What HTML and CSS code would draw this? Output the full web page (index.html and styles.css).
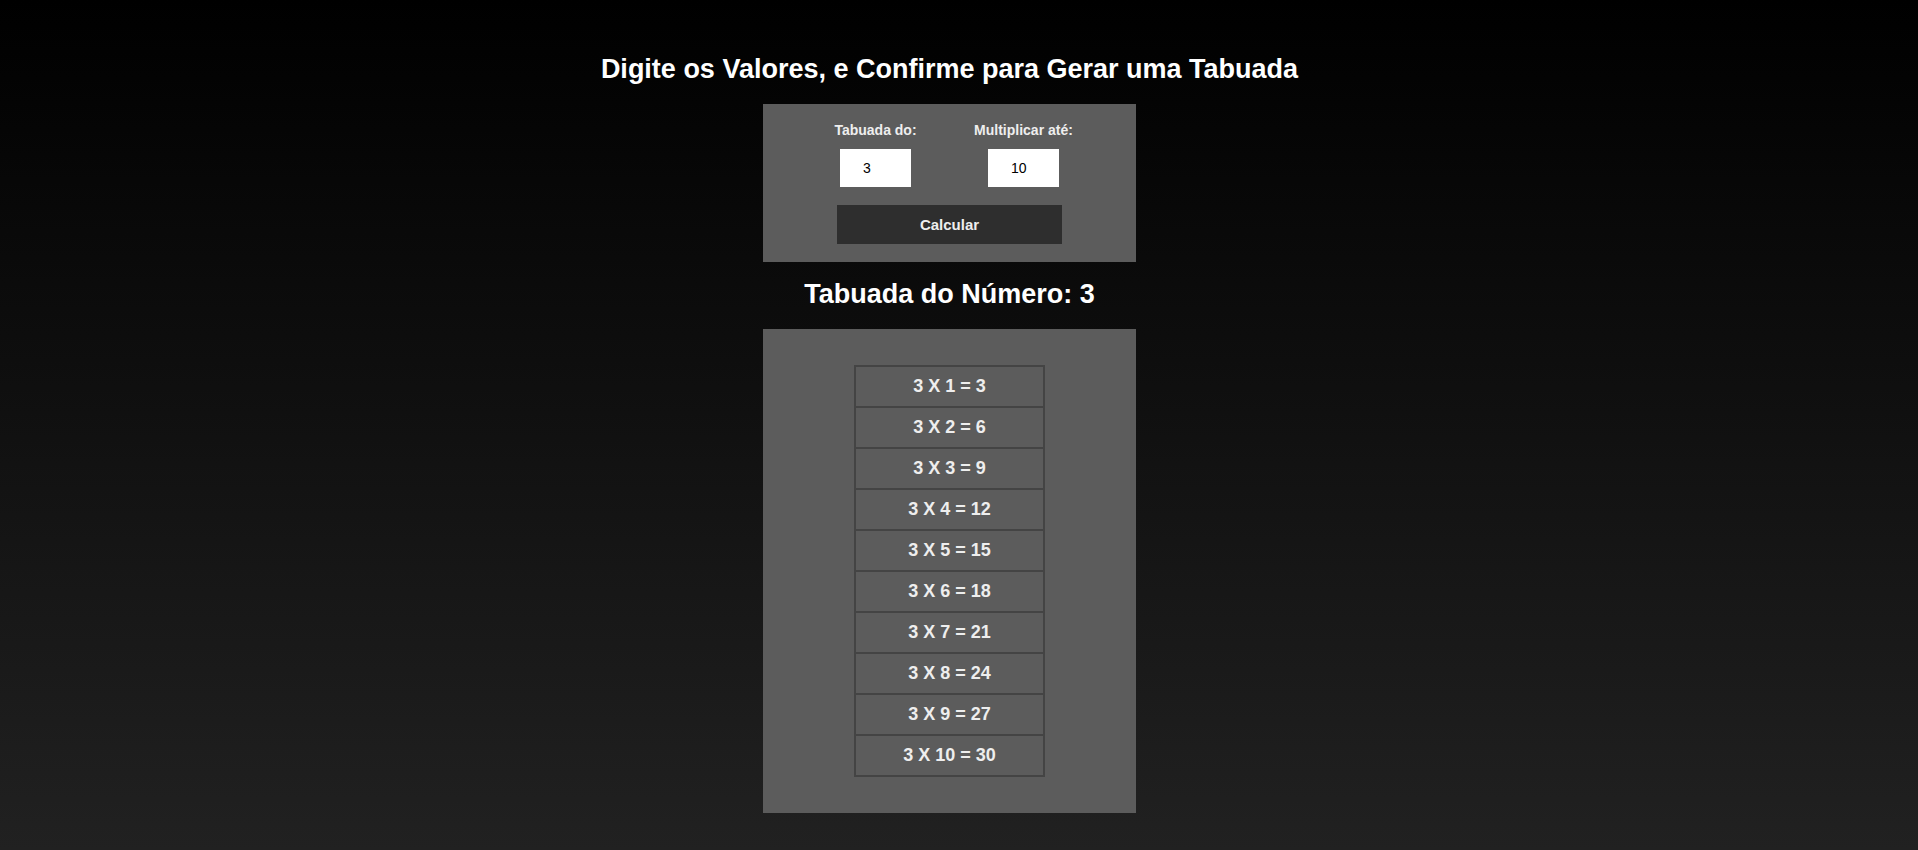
FILE: index.html
```html
<!DOCTYPE html>
<html lang="pt-BR">
<head>
    <meta charset="UTF-8">
    <meta name="viewport" content="width=device-width, initial-scale=1.0">
    <title>Tabuada</title>
    <link rel="stylesheet" href="styles.css">
</head>
<body>
    <div class="pagina">
        <h1 class="titulo">Digite os Valores, e Confirme para Gerar uma Tabuada</h1>
        <form id="formTabuada" class="painel">
            <div class="campos">
                <div class="campo">
                    <label for="numero">Tabuada do:</label>
                    <input type="number" id="numero" value="3">
                </div>
                <div class="campo">
                    <label for="limite">Multiplicar até:</label>
                    <input type="number" id="limite" value="10">
                </div>
            </div>
            <button type="button" onclick="gerarTabuada()">Calcular</button>
        </form>
        <h2 class="resultado" id="resultadoTitulo">Tabuada do Número: 3</h2>
        <div class="caixa-tabela">
            <table id="tabela">
                <tr><td>3 X 1 = 3</td></tr>
                <tr><td>3 X 2 = 6</td></tr>
                <tr><td>3 X 3 = 9</td></tr>
                <tr><td>3 X 4 = 12</td></tr>
                <tr><td>3 X 5 = 15</td></tr>
                <tr><td>3 X 6 = 18</td></tr>
                <tr><td>3 X 7 = 21</td></tr>
                <tr><td>3 X 8 = 24</td></tr>
                <tr><td>3 X 9 = 27</td></tr>
                <tr><td>3 X 10 = 30</td></tr>
            </table>
        </div>
    </div>
    <script>
        function gerarTabuada() {
            const numero = parseInt(document.getElementById('numero').value) || 0;
            const limite = parseInt(document.getElementById('limite').value) || 0;
            const tabela = document.getElementById('tabela');
            document.getElementById('resultadoTitulo').textContent = 'Tabuada do Número: ' + numero;
            tabela.innerHTML = '';
            for (let i = 1; i <= limite; i++) {
                const linha = tabela.insertRow();
                linha.insertCell().textContent = `${numero} X ${i} = ${numero * i}`;
            }
        }
    </script>
</body>
</html>
```

FILE: styles.css
```css
body {
    margin: 0;
    min-height: 100vh;
    background: linear-gradient(to bottom, #000000, #212121);
    font-family: "Liberation Sans", Arial, sans-serif;
    color: #fff;
}
.pagina {
    display: flex;
    flex-direction: column;
    align-items: center;
    padding-right: 19px;
}
.titulo {
    font-size: 27px;
    line-height: 31px;
    margin: 54px 0 19px;
}
.painel {
    width: 373px;
    box-sizing: border-box;
    padding: 18px 0;
    background-color: #5c5c5c;
    display: flex;
    flex-direction: column;
    align-items: center;
}
.campos {
    display: grid;
    grid-template-columns: 148px 148px;
}
.campo {
    display: flex;
    flex-direction: column;
    align-items: center;
}
label {
    font-size: 14px;
    line-height: 16px;
    font-weight: bold;
    color: #eee;
}
input[type="number"] {
    width: 71px;
    height: 38px;
    margin-top: 11px;
    padding: 0 0 0 23px;
    border: none;
    box-sizing: border-box;
    background-color: #fff;
    color: #000;
    font-family: "Liberation Sans", Arial, sans-serif;
    font-size: 14px;
    -moz-appearance: textfield;
}
input::-webkit-outer-spin-button,
input::-webkit-inner-spin-button {
    -webkit-appearance: none;
    margin: 0;
}
button {
    width: 225px;
    height: 39px;
    margin-top: 18px;
    border: none;
    background-color: #2e2e2e;
    color: #eee;
    font-family: "Liberation Sans", Arial, sans-serif;
    font-size: 15px;
    font-weight: bold;
    cursor: pointer;
}
.resultado {
    font-size: 27px;
    line-height: 31px;
    margin: 17px 0 19px;
}
.caixa-tabela {
    width: 373px;
    padding: 36px 0;
    background-color: #5c5c5c;
    display: flex;
    justify-content: center;
}
table {
    border-collapse: collapse;
}
td {
    width: 187px;
    height: 39px;
    padding: 0;
    border: 2px solid #444;
    text-align: center;
    font-size: 18px;
    font-weight: bold;
    color: #eee;
}
```
